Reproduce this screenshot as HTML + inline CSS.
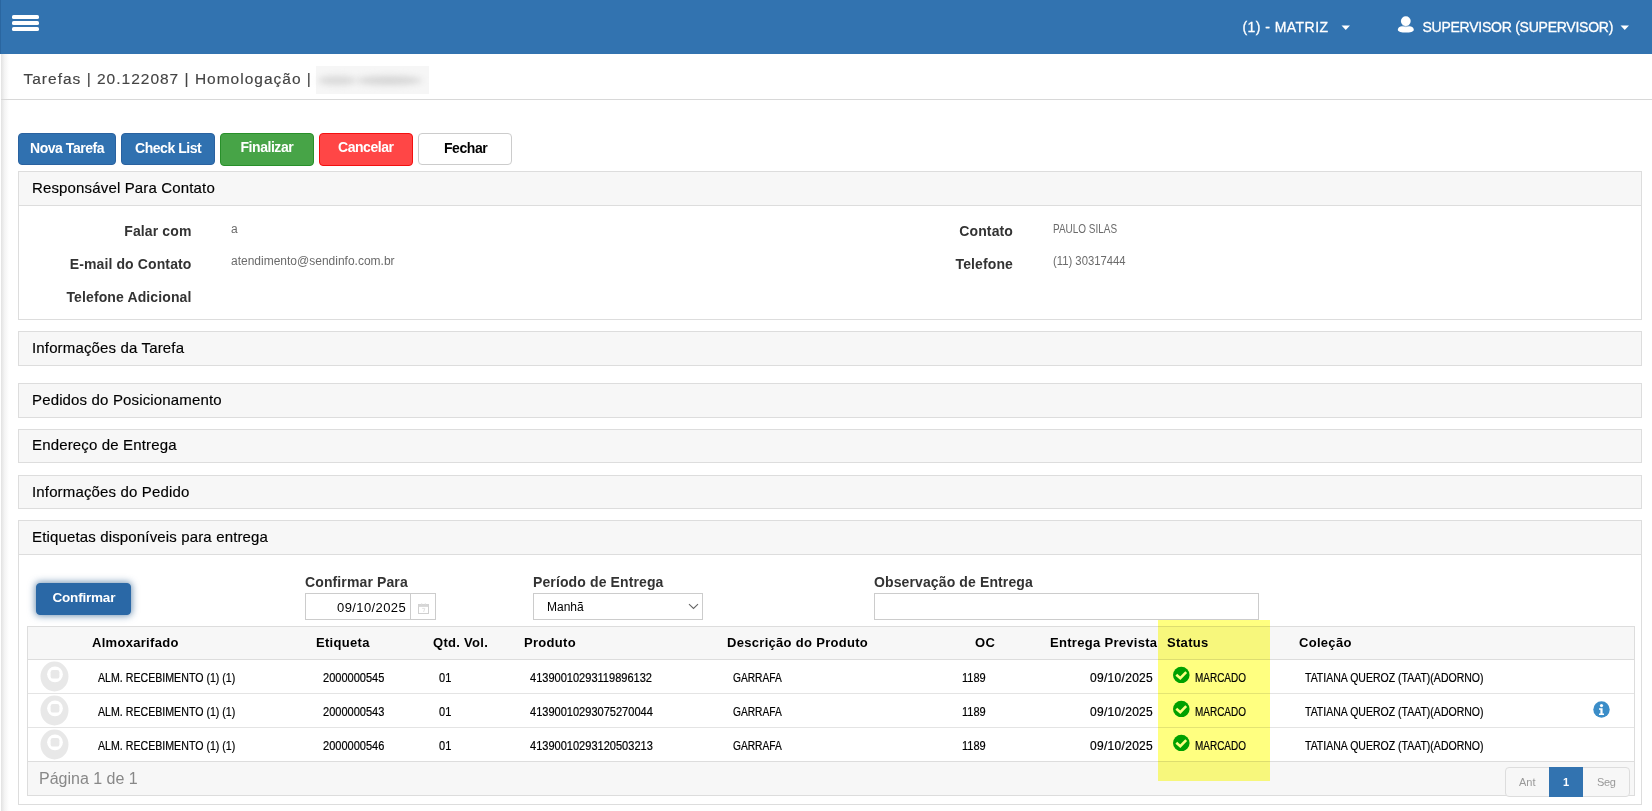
<!DOCTYPE html>
<html><head><meta charset="utf-8">
<style>
*{box-sizing:border-box;margin:0;padding:0}
html,body{width:1652px;height:811px;overflow:hidden;background:#fff;font-family:"Liberation Sans",sans-serif}
.a{position:absolute}
.t{position:absolute;white-space:pre;line-height:1}
#hdr{left:0;top:0;width:1652px;height:54px;background:#3273b0}
#hdr .edge{left:0;top:0;width:1px;height:54px;background:#2a66a0}
.bar{position:absolute;left:12px;width:27px;height:4px;border-radius:1.6px;background:#fff}
#shade{left:1px;top:54px;width:8px;height:757px;background:linear-gradient(to right,#e2e2e2,#f4f4f4 45%,#fff)}
.panel{position:absolute;left:18px;width:1624px;border:1px solid #ddd;background:#fff}
.ph{position:absolute;left:0;top:0;width:100%;height:34px;background:#f7f7f7;border-bottom:1px solid #ddd}
.pt{font-size:15px;color:#000;letter-spacing:0.15px;-webkit-text-stroke:0.15px #000}
.btn{position:absolute;border-radius:4px;border:1px solid}
.bt{font-size:14px;font-weight:700;color:#fff;letter-spacing:-0.45px}
.lab{font-size:14px;font-weight:700;color:#333;letter-spacing:0.12px}
.val{font-size:12px;color:#6b6b6b}
.th{font-size:13px;font-weight:700;color:#000;letter-spacing:0.3px}
.td{font-size:12px;color:#000;transform-origin:0 0;-webkit-text-stroke:0.2px #000}
.hl{position:absolute;left:1158px;top:620px;width:112px;height:161px;background:#ffff80;mix-blend-mode:multiply}
</style></head><body>
<!-- header -->
<div id="hdr" class="a">
  <div class="a edge"></div>
  <div class="bar" style="top:14.6px"></div>
  <div class="bar" style="top:21px"></div>
  <div class="bar" style="top:27.2px"></div>
</div>
<div id="shade" class="a"></div>

<!-- header texts -->
<div class="t" style="left:1242.5px;top:20px;font-size:14px;color:#fff;letter-spacing:0.45px;-webkit-text-stroke:0.3px #fff">(1) - MATRIZ</div>
<svg class="a" style="left:1340.5px;top:24.5px" width="10" height="6"><path d="M0.5 0.5h8.5l-4.25 4.5z" fill="#fff"/></svg>
<svg class="a" style="left:1397px;top:15px" width="18" height="19" viewBox="0 0 18 19"><circle cx="8.8" cy="6.1" r="4.9" fill="#fff"/><path d="M0.8 14.8C0.8 12 4 10.4 8.8 10.4S16.8 12 16.8 14.8C16.8 17 13 17.6 8.8 17.6S0.8 17 0.8 14.8z" fill="#fff"/><path d="M3.8 10.9Q8.8 12.4 13.8 10.9" fill="none" stroke="#3273b0" stroke-width="0.8" opacity="0.6"/></svg>
<div class="t" style="left:1422.5px;top:20px;font-size:14px;color:#fff;letter-spacing:-0.25px;-webkit-text-stroke:0.3px #fff">SUPERVISOR (SUPERVISOR)</div>
<svg class="a" style="left:1619.5px;top:24.5px" width="10" height="6"><path d="M0.5 0.5h8.5l-4.25 4.5z" fill="#fff"/></svg>

<!-- breadcrumb -->
<div class="t" style="left:23.5px;top:70.5px;font-size:15.5px;color:#444;letter-spacing:1px;-webkit-text-stroke:0.15px #444">Tarefas | 20.122087 | Homologação |</div>
<div class="a" style="left:316px;top:66px;width:113px;height:28px;background:#f6f6f6;filter:blur(0.6px)"></div>
<div class="a" style="left:318px;top:76px;width:38px;height:9px;border-radius:50%;background:#d9d9d9;filter:blur(3px)"></div>
<div class="a" style="left:356px;top:76px;width:66px;height:9px;border-radius:50%;background:#d6d6d6;filter:blur(3px)"></div>
<div class="a" style="left:1px;top:99px;width:1651px;height:1px;background:#d8d8d8"></div>

<!-- buttons -->
<div class="btn" style="left:18px;top:133px;width:98px;height:32px;background:#3071b0;border-color:#2a62a0"></div>
<div class="t bt" style="left:30px;top:140.5px">Nova Tarefa</div>
<div class="btn" style="left:121px;top:133px;width:94px;height:32px;background:#3071b0;border-color:#2a62a0"></div>
<div class="t bt" style="left:135px;top:140.5px">Check List</div>
<div class="btn" style="left:220px;top:133px;width:94px;height:33px;background:#47a447;border-color:#28902a"></div>
<div class="t bt" style="left:240.5px;top:139.5px">Finalizar</div>
<div class="btn" style="left:319px;top:133px;width:94px;height:33px;background:#ff4646;border-color:#f31010"></div>
<div class="t bt" style="left:338px;top:139.5px">Cancelar</div>
<div class="btn" style="left:418px;top:133px;width:94px;height:32px;background:#fff;border-color:#ccc"></div>
<div class="t bt" style="left:444px;top:140.5px;color:#000">Fechar</div>

<!-- panel 1 -->
<div class="panel" style="top:171px;height:149px"><div class="ph"></div></div>
<div class="t pt" style="left:32px;top:180px">Responsável Para Contato</div>
<div class="t lab" style="right:1460.5px;top:224px">Falar com</div>
<div class="t lab" style="right:1460.5px;top:257px">E-mail do Contato</div>
<div class="t lab" style="right:1460.5px;top:290px">Telefone Adicional</div>
<div class="t val" style="left:231px;top:223px">a</div>
<div class="t val" style="left:231px;top:255px">atendimento@sendinfo.com.br</div>
<div class="t lab" style="right:639px;top:224px">Contato</div>
<div class="t lab" style="right:639px;top:257px">Telefone</div>
<div class="t val" style="left:1053px;top:223px;transform:scaleX(0.83);transform-origin:0 0">PAULO SILAS</div>
<div class="t val" style="left:1053px;top:255px;transform:scaleX(0.94);transform-origin:0 0">(11) 30317444</div>

<!-- collapsed panels -->
<div class="panel" style="top:331px;height:35px;background:#f7f7f7"></div>
<div class="t pt" style="left:32px;top:340px">Informações da Tarefa</div>
<div class="panel" style="top:383px;height:35px;background:#f7f7f7"></div>
<div class="t pt" style="left:32px;top:392px">Pedidos do Posicionamento</div>
<div class="panel" style="top:429px;height:34px;background:#f7f7f7"></div>
<div class="t pt" style="left:32px;top:437px">Endereço de Entrega</div>
<div class="panel" style="top:475px;height:34px;background:#f7f7f7"></div>
<div class="t pt" style="left:32px;top:484px">Informações do Pedido</div>

<!-- etiquetas panel -->
<div class="panel" style="top:520px;height:285px"><div class="ph"></div></div>
<div class="t pt" style="left:32px;top:529px">Etiquetas disponíveis para entrega</div>

<!-- form -->
<div class="btn" style="left:36px;top:583px;width:95px;height:32px;background:#2a68a6;border-color:#2a68a6;box-shadow:0 0 7px 1px rgba(40,90,140,0.65)"></div>
<div class="t bt" style="left:52.5px;top:590.5px;font-size:13.5px;letter-spacing:-0.2px">Confirmar</div>
<div class="t lab" style="left:305px;top:575px">Confirmar Para</div>
<div class="a" style="left:305px;top:593px;width:131px;height:27px;border:1px solid #ccc;background:#fff"></div>
<div class="a" style="left:410px;top:593px;width:1px;height:27px;background:#ccc"></div>
<div class="t" style="left:337px;top:601px;font-size:13px;color:#000;letter-spacing:0.4px">09/10/2025</div>
<svg class="a" style="left:417px;top:603px" width="14" height="12" viewBox="0 0 14 12"><rect x="1.5" y="1.5" width="10" height="9" fill="none" stroke="#d0d0d0" stroke-width="1"/><rect x="1.5" y="1.3" width="10" height="2.6" fill="#d6d6d6"/><rect x="4.2" y="0.3" width="1" height="1.6" fill="#ddd"/><rect x="7.8" y="0.3" width="1" height="1.6" fill="#ddd"/><path d="M5.2 5.4h2.6l-1.2 3.6" fill="none" stroke="#e2e2e2" stroke-width="1"/></svg>
<div class="t lab" style="left:533px;top:575px">Período de Entrega</div>
<div class="a" style="left:533px;top:593px;width:170px;height:27px;border:1px solid #ccc;background:#fff"></div>
<div class="t" style="left:547px;top:601px;font-size:12px;color:#000">Manhã</div>
<svg class="a" style="left:688px;top:603px" width="11" height="7" viewBox="0 0 11 7"><path d="M1 1.2l4.5 4.3L10 1.2" fill="none" stroke="#666" stroke-width="1.1"/></svg>
<div class="t lab" style="left:874px;top:575px">Observação de Entrega</div>
<div class="a" style="left:874px;top:593px;width:385px;height:27px;border:1px solid #ccc;background:#fff"></div>

<!-- table -->
<div class="a" style="left:27px;top:626px;width:1608px;height:170px;border:1px solid #ddd;background:#fff"></div>
<div class="a" style="left:28px;top:627px;width:1606px;height:33px;background:#f7f7f7;border-bottom:1px solid #ddd"></div>
<div class="a" style="left:28px;top:693px;width:1606px;height:1px;background:#e4e4e4"></div>
<div class="a" style="left:28px;top:727px;width:1606px;height:1px;background:#e4e4e4"></div>
<div class="a" style="left:28px;top:761px;width:1606px;height:34px;background:#f7f7f7;border-top:1px solid #ddd"></div>
<div class="t th" style="left:92px;top:636px">Almoxarifado</div>
<div class="t th" style="left:316px;top:636px">Etiqueta</div>
<div class="t th" style="left:433px;top:636px">Qtd. Vol.</div>
<div class="t th" style="left:524px;top:636px">Produto</div>
<div class="t th" style="left:727px;top:636px">Descrição do Produto</div>
<div class="t th" style="left:975px;top:636px">OC</div>
<div class="t th" style="left:1050px;top:636px">Entrega Prevista</div>
<div class="t th" style="left:1167px;top:636px">Status</div>
<div class="t th" style="left:1299px;top:636px">Coleção</div>
<svg class="a" style="left:40px;top:661px" width="30" height="31" viewBox="0 0 30 31"><ellipse cx="14.5" cy="15.5" rx="14" ry="15" fill="#e8e8e8"/><circle cx="15" cy="13.3" r="7.9" fill="#fff"/><rect x="10.6" y="9" width="8.8" height="8.6" rx="2.2" fill="#e8e8e8"/></svg>
<div class="t td" style="left:98px;top:672px;transform:scaleX(0.885)">ALM. RECEBIMENTO (1) (1)</div>
<div class="t td" style="left:323px;top:672px;transform:scaleX(0.92)">2000000545</div>
<div class="t td" style="left:439px;top:672px;transform:scaleX(0.92)">01</div>
<div class="t td" style="left:530px;top:672px;transform:scaleX(0.92)">41390010293119896132</div>
<div class="t td" style="left:733px;top:672px;transform:scaleX(0.85)">GARRAFA</div>
<div class="t td" style="left:962px;top:672px;transform:scaleX(0.92)">1189</div>
<div class="t td" style="left:1090px;top:672px;letter-spacing:0.3px">09/10/2025</div>
<svg class="a" style="left:1173px;top:666px" width="17" height="17" viewBox="0 0 17 17"><circle cx="8.3" cy="9" r="8.3" fill="#00a000"/><path d="M3.3 8.7L7.3 12.2L13.2 6.2" fill="none" stroke="#fff" stroke-width="2.6"/></svg>
<div class="t td" style="left:1195px;top:672px;transform:scaleX(0.83)">MARCADO</div>
<div class="t td" style="left:1305px;top:672px;transform:scaleX(0.876)">TATIANA QUEROZ (TAAT)(ADORNO)</div>
<svg class="a" style="left:40px;top:695px" width="30" height="31" viewBox="0 0 30 31"><ellipse cx="14.5" cy="15.5" rx="14" ry="15" fill="#e8e8e8"/><circle cx="15" cy="13.3" r="7.9" fill="#fff"/><rect x="10.6" y="9" width="8.8" height="8.6" rx="2.2" fill="#e8e8e8"/></svg>
<div class="t td" style="left:98px;top:706px;transform:scaleX(0.885)">ALM. RECEBIMENTO (1) (1)</div>
<div class="t td" style="left:323px;top:706px;transform:scaleX(0.92)">2000000543</div>
<div class="t td" style="left:439px;top:706px;transform:scaleX(0.92)">01</div>
<div class="t td" style="left:530px;top:706px;transform:scaleX(0.92)">41390010293075270044</div>
<div class="t td" style="left:733px;top:706px;transform:scaleX(0.85)">GARRAFA</div>
<div class="t td" style="left:962px;top:706px;transform:scaleX(0.92)">1189</div>
<div class="t td" style="left:1090px;top:706px;letter-spacing:0.3px">09/10/2025</div>
<svg class="a" style="left:1173px;top:700px" width="17" height="17" viewBox="0 0 17 17"><circle cx="8.3" cy="9" r="8.3" fill="#00a000"/><path d="M3.3 8.7L7.3 12.2L13.2 6.2" fill="none" stroke="#fff" stroke-width="2.6"/></svg>
<div class="t td" style="left:1195px;top:706px;transform:scaleX(0.83)">MARCADO</div>
<div class="t td" style="left:1305px;top:706px;transform:scaleX(0.876)">TATIANA QUEROZ (TAAT)(ADORNO)</div>
<svg class="a" style="left:40px;top:729px" width="30" height="31" viewBox="0 0 30 31"><ellipse cx="14.5" cy="15.5" rx="14" ry="15" fill="#e8e8e8"/><circle cx="15" cy="13.3" r="7.9" fill="#fff"/><rect x="10.6" y="9" width="8.8" height="8.6" rx="2.2" fill="#e8e8e8"/></svg>
<div class="t td" style="left:98px;top:740px;transform:scaleX(0.885)">ALM. RECEBIMENTO (1) (1)</div>
<div class="t td" style="left:323px;top:740px;transform:scaleX(0.92)">2000000546</div>
<div class="t td" style="left:439px;top:740px;transform:scaleX(0.92)">01</div>
<div class="t td" style="left:530px;top:740px;transform:scaleX(0.92)">41390010293120503213</div>
<div class="t td" style="left:733px;top:740px;transform:scaleX(0.85)">GARRAFA</div>
<div class="t td" style="left:962px;top:740px;transform:scaleX(0.92)">1189</div>
<div class="t td" style="left:1090px;top:740px;letter-spacing:0.3px">09/10/2025</div>
<svg class="a" style="left:1173px;top:734px" width="17" height="17" viewBox="0 0 17 17"><circle cx="8.3" cy="9" r="8.3" fill="#00a000"/><path d="M3.3 8.7L7.3 12.2L13.2 6.2" fill="none" stroke="#fff" stroke-width="2.6"/></svg>
<div class="t td" style="left:1195px;top:740px;transform:scaleX(0.83)">MARCADO</div>
<div class="t td" style="left:1305px;top:740px;transform:scaleX(0.876)">TATIANA QUEROZ (TAAT)(ADORNO)</div>

<svg class="a" style="left:1593px;top:701px" width="17" height="17" viewBox="0 0 17 17"><circle cx="8.5" cy="8.5" r="8.2" fill="#3b8dc8"/><circle cx="8.5" cy="4.6" r="1.6" fill="#fff"/><path d="M6 7.2h3.6v5.3h1.4v1.6H6v-1.6h1.4V8.8H6z" fill="#fff"/></svg>
<div class="t" style="left:39px;top:771px;font-size:16px;color:#888">Página 1 de 1</div>
<div class="a" style="left:1505px;top:767px;width:125px;height:30px;border:1px solid #ddd;border-radius:4px;background:#f7f7f7"></div>
<div class="a" style="left:1549px;top:767px;width:34px;height:30px;background:#3273b0"></div>
<div class="t" style="left:1519px;top:777px;font-size:11px;color:#999">Ant</div>
<div class="t" style="left:1563px;top:777px;font-size:11px;color:#fff;font-weight:700">1</div>
<div class="t" style="left:1597px;top:777px;font-size:11px;color:#999;letter-spacing:-0.3px">Seg</div>
<div class="hl"></div>
</body></html>
